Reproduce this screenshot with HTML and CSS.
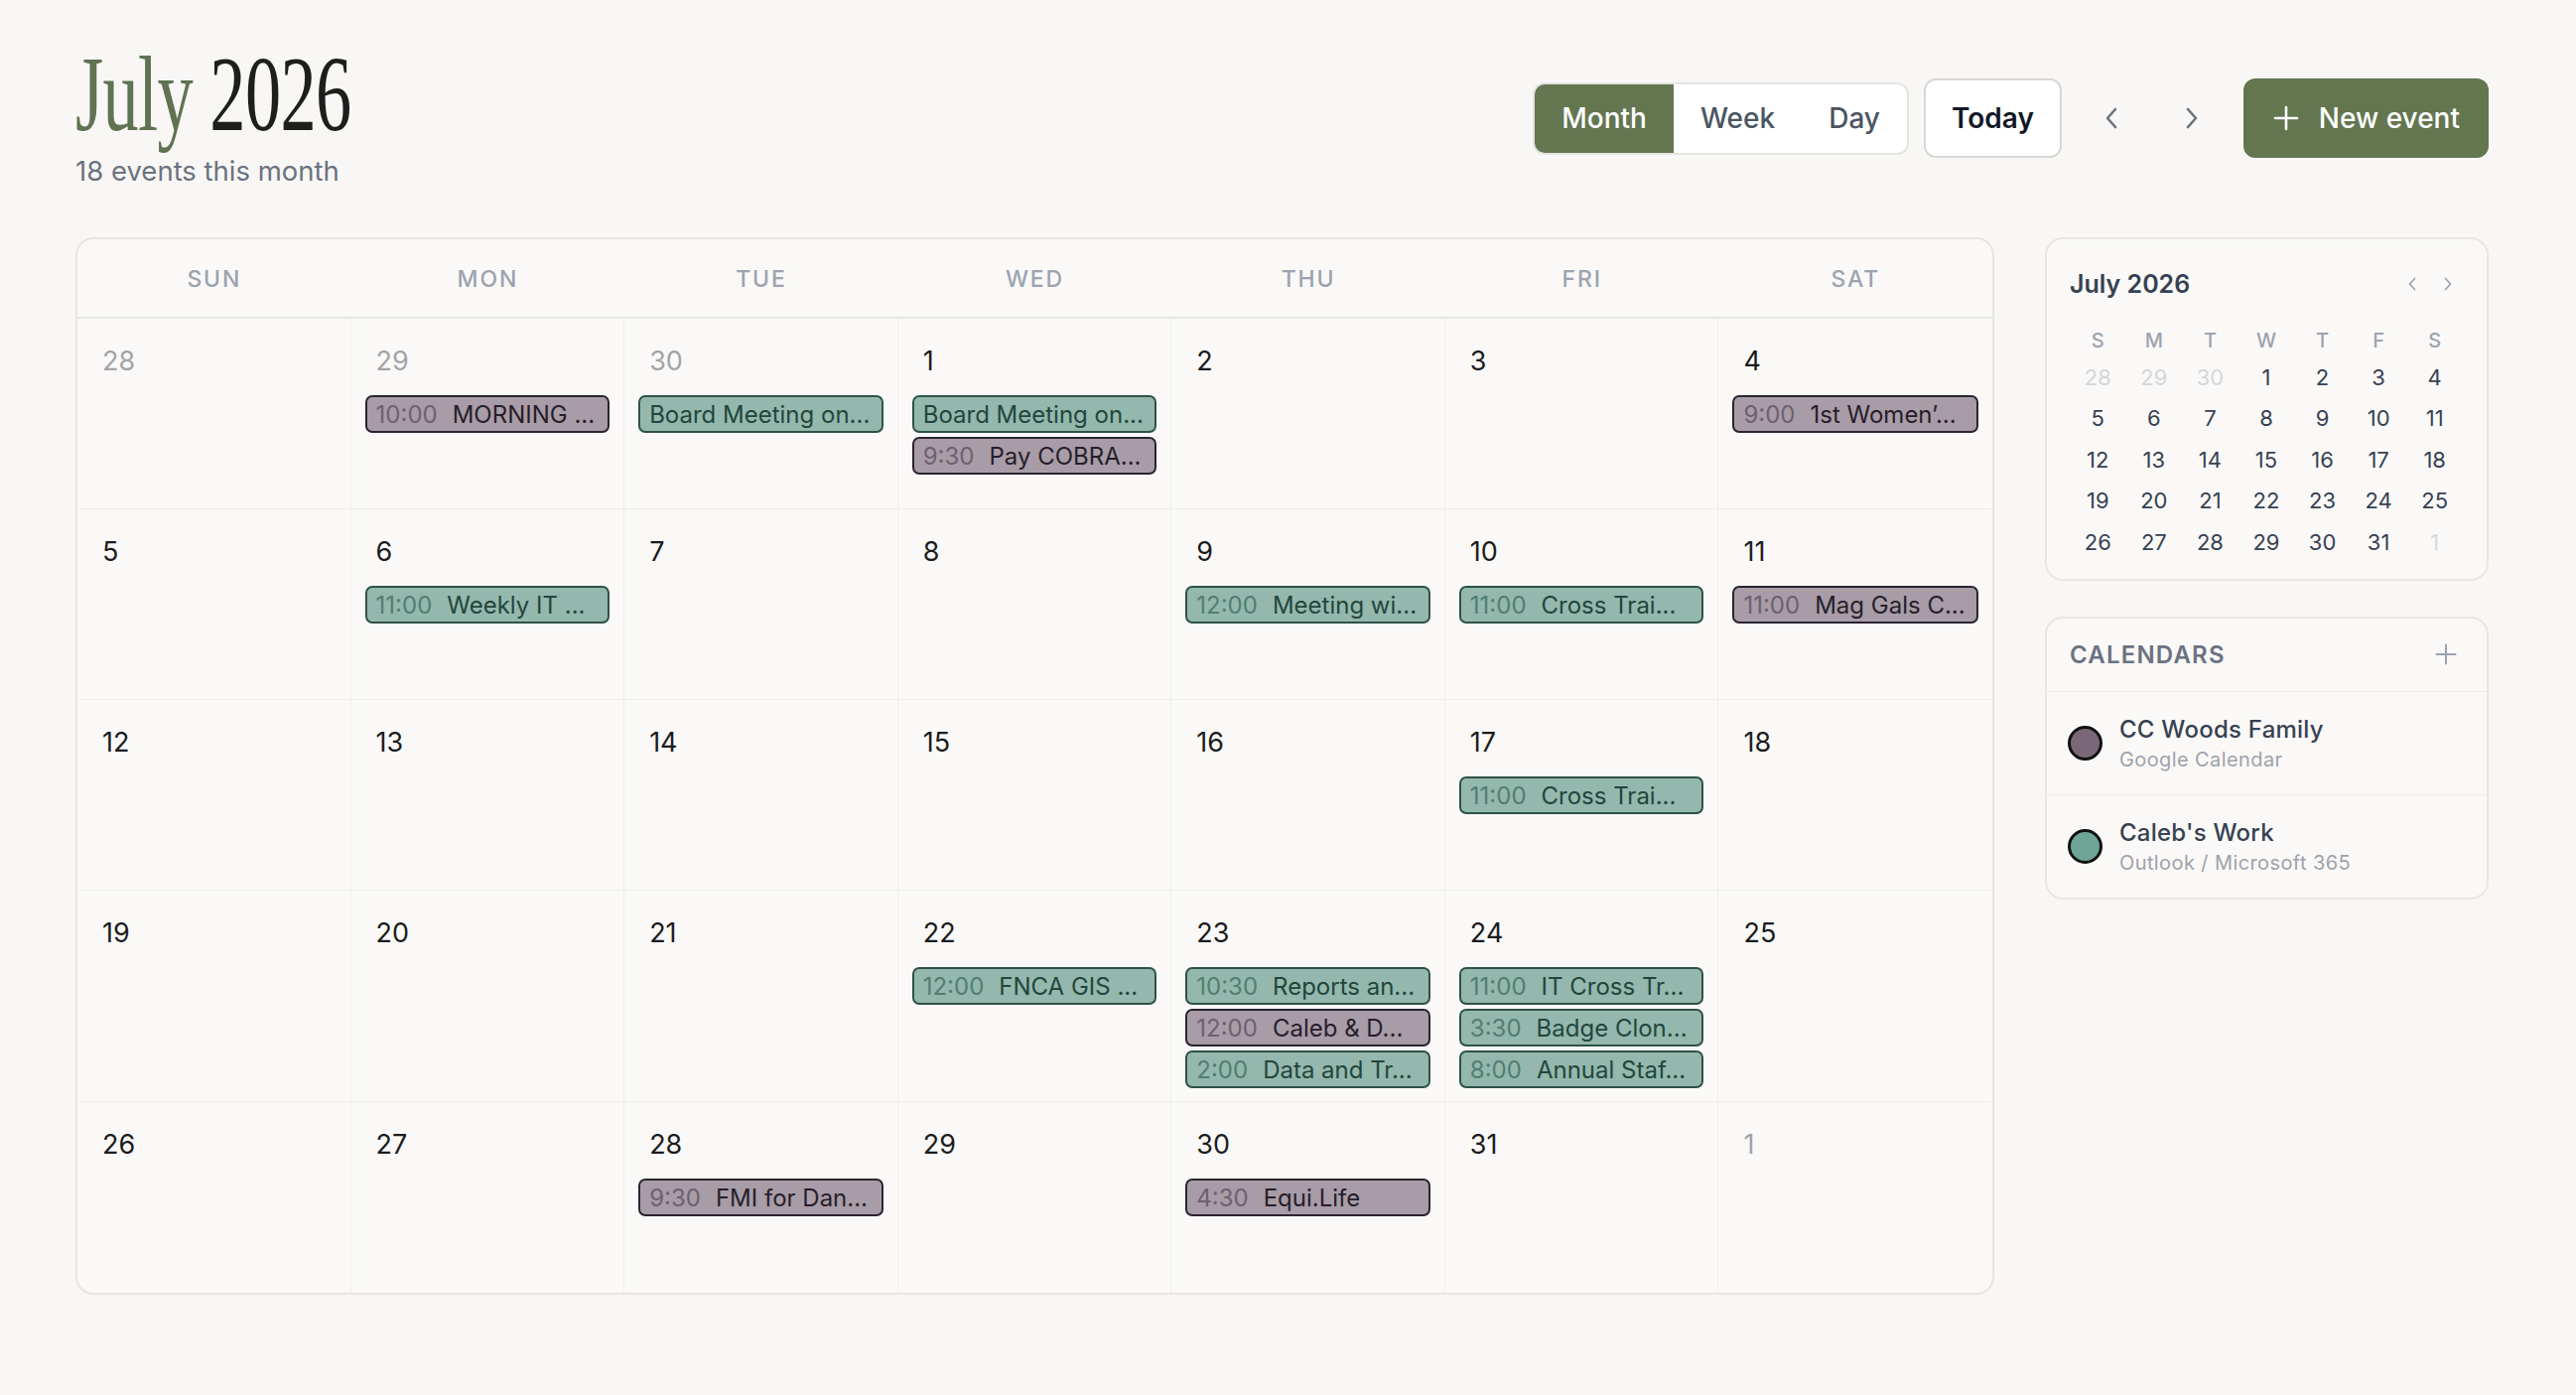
FILE: index.html
```html
<!DOCTYPE html>
<html lang="en">
<head>
<meta charset="utf-8">
<title>July 2026</title>
<link rel="stylesheet" href="styles.css">
</head>
<body>
<div class="page">
  <header class="topbar">
    <div class="title-block">
      <h1 class="title"><span class="month">July</span> <span class="year">2026</span></h1>
      <p class="subtitle">18 events this month</p>
    </div>
    <div class="toolbar">
      <div class="seg">
        <button class="seg-btn active">Month</button>
        <button class="seg-btn">Week</button>
        <button class="seg-btn">Day</button>
      </div>
      <button class="today">Today</button>
      <button class="nav-btn prev" aria-label="Previous"><svg width="16" height="22" viewBox="0 0 16 22"><path d="M12 2 L4 11 L12 20" fill="none" stroke="#6b7280" stroke-width="2.6" stroke-linecap="round" stroke-linejoin="round"/></svg></button>
      <button class="nav-btn next" aria-label="Next"><svg width="16" height="22" viewBox="0 0 16 22"><path d="M4 2 L12 11 L4 20" fill="none" stroke="#6b7280" stroke-width="2.6" stroke-linecap="round" stroke-linejoin="round"/></svg></button>
      <button class="new-btn"><svg width="26" height="26" viewBox="0 0 26 26"><path d="M13 2 V24 M2 13 H24" fill="none" stroke="#fff" stroke-width="2.6" stroke-linecap="round"/></svg><span>New event</span></button>
    </div>
  </header>

  <div class="layout">
    <section class="calendar">
      <div class="weekdays">
        <div class="wd">SUN</div><div class="wd">MON</div><div class="wd">TUE</div><div class="wd">WED</div><div class="wd">THU</div><div class="wd">FRI</div><div class="wd">SAT</div>
      </div>
      <div class="grid">
        <div class="cell"><div class="date muted">28</div></div>
        <div class="cell"><div class="date muted">29</div><div class="events"><div class="chip fam"><span class="time">10:00</span><span class="name">MORNING ...</span></div></div></div>
        <div class="cell"><div class="date muted">30</div><div class="events"><div class="chip work"><span class="name">Board Meeting on...</span></div></div></div>
        <div class="cell"><div class="date">1</div><div class="events"><div class="chip work"><span class="name">Board Meeting on...</span></div><div class="chip fam"><span class="time">9:30</span><span class="name">Pay COBRA...</span></div></div></div>
        <div class="cell"><div class="date">2</div></div>
        <div class="cell"><div class="date">3</div></div>
        <div class="cell"><div class="date">4</div><div class="events"><div class="chip fam"><span class="time">9:00</span><span class="name">1st Women’...</span></div></div></div>

        <div class="cell"><div class="date">5</div></div>
        <div class="cell"><div class="date">6</div><div class="events"><div class="chip work"><span class="time">11:00</span><span class="name">Weekly IT ...</span></div></div></div>
        <div class="cell"><div class="date">7</div></div>
        <div class="cell"><div class="date">8</div></div>
        <div class="cell"><div class="date">9</div><div class="events"><div class="chip work"><span class="time">12:00</span><span class="name">Meeting wi...</span></div></div></div>
        <div class="cell"><div class="date">10</div><div class="events"><div class="chip work"><span class="time">11:00</span><span class="name">Cross Trai...</span></div></div></div>
        <div class="cell"><div class="date">11</div><div class="events"><div class="chip fam"><span class="time">11:00</span><span class="name">Mag Gals C...</span></div></div></div>

        <div class="cell"><div class="date">12</div></div>
        <div class="cell"><div class="date">13</div></div>
        <div class="cell"><div class="date">14</div></div>
        <div class="cell"><div class="date">15</div></div>
        <div class="cell"><div class="date">16</div></div>
        <div class="cell"><div class="date">17</div><div class="events"><div class="chip work"><span class="time">11:00</span><span class="name">Cross Trai...</span></div></div></div>
        <div class="cell"><div class="date">18</div></div>

        <div class="cell"><div class="date">19</div></div>
        <div class="cell"><div class="date">20</div></div>
        <div class="cell"><div class="date">21</div></div>
        <div class="cell"><div class="date">22</div><div class="events"><div class="chip work"><span class="time">12:00</span><span class="name">FNCA GIS ...</span></div></div></div>
        <div class="cell"><div class="date">23</div><div class="events"><div class="chip work"><span class="time">10:30</span><span class="name">Reports an...</span></div><div class="chip fam"><span class="time">12:00</span><span class="name">Caleb &amp; D...</span></div><div class="chip work"><span class="time">2:00</span><span class="name">Data and Tr...</span></div></div></div>
        <div class="cell"><div class="date">24</div><div class="events"><div class="chip work"><span class="time">11:00</span><span class="name">IT Cross Tr...</span></div><div class="chip work"><span class="time">3:30</span><span class="name">Badge Clon...</span></div><div class="chip work"><span class="time">8:00</span><span class="name">Annual Staf...</span></div></div></div>
        <div class="cell"><div class="date">25</div></div>

        <div class="cell"><div class="date">26</div></div>
        <div class="cell"><div class="date">27</div></div>
        <div class="cell"><div class="date">28</div><div class="events"><div class="chip fam"><span class="time">9:30</span><span class="name">FMI for Dan...</span></div></div></div>
        <div class="cell"><div class="date">29</div></div>
        <div class="cell"><div class="date">30</div><div class="events"><div class="chip fam"><span class="time">4:30</span><span class="name">Equi.Life</span></div></div></div>
        <div class="cell"><div class="date">31</div></div>
        <div class="cell"><div class="date muted">1</div></div>
      </div>
    </section>

    <aside class="sidebar">
      <div class="card mini">
        <div class="mini-head">
          <span class="mini-title">July 2026</span>
          <div class="mini-nav">
            <span class="mini-arrow"><svg width="10" height="14" viewBox="0 0 10 14"><path d="M7.5 1.5 L2.5 7 L7.5 12.5" fill="none" stroke="#9ca3af" stroke-width="1.8" stroke-linecap="round" stroke-linejoin="round"/></svg></span>
            <span class="mini-arrow"><svg width="10" height="14" viewBox="0 0 10 14"><path d="M2.5 1.5 L7.5 7 L2.5 12.5" fill="none" stroke="#9ca3af" stroke-width="1.8" stroke-linecap="round" stroke-linejoin="round"/></svg></span>
          </div>
        </div>
        <div class="mini-grid">
          <div class="mini-wd">S</div><div class="mini-wd">M</div><div class="mini-wd">T</div><div class="mini-wd">W</div><div class="mini-wd">T</div><div class="mini-wd">F</div><div class="mini-wd">S</div>
          <div class="mini-d muted">28</div><div class="mini-d muted">29</div><div class="mini-d muted">30</div><div class="mini-d">1</div><div class="mini-d">2</div><div class="mini-d">3</div><div class="mini-d">4</div>
          <div class="mini-d">5</div><div class="mini-d">6</div><div class="mini-d">7</div><div class="mini-d">8</div><div class="mini-d">9</div><div class="mini-d">10</div><div class="mini-d">11</div>
          <div class="mini-d">12</div><div class="mini-d">13</div><div class="mini-d">14</div><div class="mini-d">15</div><div class="mini-d">16</div><div class="mini-d">17</div><div class="mini-d">18</div>
          <div class="mini-d">19</div><div class="mini-d">20</div><div class="mini-d">21</div><div class="mini-d">22</div><div class="mini-d">23</div><div class="mini-d">24</div><div class="mini-d">25</div>
          <div class="mini-d">26</div><div class="mini-d">27</div><div class="mini-d">28</div><div class="mini-d">29</div><div class="mini-d">30</div><div class="mini-d">31</div><div class="mini-d muted">1</div>
        </div>
      </div>

      <div class="card cals">
        <div class="cal-head">
          <span class="cal-title">CALENDARS</span>
          <svg width="22" height="22" viewBox="0 0 22 22"><path d="M11 1.5 V20.5 M1.5 11 H20.5" fill="none" stroke="#9ca3af" stroke-width="2" stroke-linecap="round"/></svg>
        </div>
        <div class="cal-item">
          <span class="dot dot-fam"></span>
          <div class="cal-text">
            <div class="cal-name">CC Woods Family</div>
            <div class="cal-sub">Google Calendar</div>
          </div>
        </div>
        <div class="cal-item">
          <span class="dot dot-work"></span>
          <div class="cal-text">
            <div class="cal-name">Caleb's Work</div>
            <div class="cal-sub">Outlook / Microsoft 365</div>
          </div>
        </div>
      </div>
    </aside>
  </div>
</div>
</body>
</html>
```

FILE: styles.css
```css
* { box-sizing: border-box; }

body {
  margin: 0;
  background: #f8f7f5;
  font-family: Inter, "Noto Sans", "Liberation Sans", sans-serif;
  color: #1f2937;
}

.page {
  padding: 41px 88px 40px 76px;
}

/* ---------- header ---------- */
.topbar {
  display: flex;
  justify-content: space-between;
  align-items: flex-start;
}

.title {
  margin: 0;
  display: block;
  font-family: "Liberation Serif", "DejaVu Serif", serif;
  font-weight: 400;
  font-size: 108px;
  line-height: 1;
  white-space: nowrap;
  letter-spacing: -1px;
  transform: scaleX(0.67);
  transform-origin: left center;
  width: 440px;
}
.title .month { color: #5f7352; }
.title .year { color: #1e1e1c; }

.subtitle {
  margin: 6px 0 0;
  font-size: 27.5px;
  line-height: 35px;
  color: #6b7280;
}

.toolbar {
  display: flex;
  align-items: center;
  margin-top: 38px;
}

button {
  font-family: inherit;
  cursor: pointer;
}

.seg {
  display: flex;
  height: 73px;
  border: 2px solid #e6e4e1;
  border-radius: 12px;
  background: #fff;
  overflow: hidden;
  margin-right: 15px;
}
.seg-btn {
  border: 0;
  background: transparent;
  font-size: 28px;
  font-weight: 500;
  color: #4b5563;
  padding: 0 27px;
}
.seg-btn.active {
  background: #637650;
  color: #fff;
}

.today {
  height: 80px;
  padding: 0 26px;
  border: 2px solid #d9d7d3;
  border-radius: 12px;
  background: #fff;
  font-size: 28px;
  font-weight: 600;
  color: #111827;
  margin-right: 18px;
}

.nav-btn {
  width: 64px;
  height: 64px;
  border: 0;
  background: transparent;
  display: flex;
  align-items: center;
  justify-content: center;
  padding: 0;
}
.nav-btn.prev { margin-right: 17px; }
.nav-btn.next { margin-right: 20px; }

.new-btn {
  height: 80px;
  display: flex;
  align-items: center;
  gap: 20px;
  padding: 0 29px 0 30px;
  border: 0;
  border-radius: 12px;
  background: #637650;
  color: #fff;
  font-size: 28px;
  font-weight: 500;
}

/* ---------- layout ---------- */
.layout {
  display: grid;
  grid-template-columns: 1fr 447px;
  gap: 51px;
  align-items: start;
  margin-top: 49px;
}

/* ---------- month grid ---------- */
.calendar {
  border: 2px solid #e7e5e2;
  border-radius: 18px;
  background: #faf9f8;
  overflow: hidden;
}

.weekdays {
  display: grid;
  grid-template-columns: repeat(7, 1fr);
  border-bottom: 2px solid #e8e6e3;
}
.wd {
  height: 78px;
  line-height: 81px;
  text-align: center;
  font-size: 23px;
  font-weight: 500;
  letter-spacing: 0.08em;
  color: #9ca3af;
}

.grid {
  display: grid;
  grid-template-columns: repeat(7, 1fr);
}
.cell {
  min-height: 192px;
  padding: 25px 14px 13px;
  border-right: 1px solid #f1efec;
  border-bottom: 1px solid #f1efec;
  min-width: 0;
}
.cell:nth-child(7n) { border-right: 0; }
.cell:nth-last-child(-n+7) { border-bottom: 0; }

.date {
  font-size: 27px;
  line-height: 36px;
  padding-left: 11px;
  margin-bottom: 16px;
  color: #1c1c1c;
}
.date.muted { color: #a3a3a8; }

.events {
  display: flex;
  flex-direction: column;
  gap: 4px;
}

.chip {
  height: 38px;
  border: 2px solid;
  border-radius: 7px;
  display: flex;
  align-items: center;
  gap: 15px;
  padding: 0 9px;
  font-size: 24px;
  white-space: nowrap;
  overflow: hidden;
}
.chip .name { overflow: hidden; }
.chip.fam {
  background: #a89ca7;
  border-color: #2a2430;
  color: #261e2b;
}
.chip.fam .time { color: #6c616f; }
.chip.work {
  background: #94b8ad;
  border-color: #2e5247;
  color: #22463c;
}
.chip.work .time { color: #537d71; }

/* ---------- sidebar ---------- */
.sidebar {
  display: flex;
  flex-direction: column;
  gap: 36px;
}

.card {
  border: 2px solid #e9e7e4;
  border-radius: 18px;
  background: #faf9f8;
}

.mini {
  padding: 27px 24px 17px 23px;
}
.mini-head {
  display: flex;
  justify-content: space-between;
  align-items: center;
  height: 36px;
}
.mini-title {
  font-size: 25px;
  font-weight: 600;
  color: #374151;
}
.mini-nav {
  display: flex;
  gap: 6px;
}
.mini-arrow {
  width: 30px;
  height: 30px;
  display: flex;
  align-items: center;
  justify-content: center;
}

.mini-grid {
  display: grid;
  grid-template-columns: repeat(7, 1fr);
  margin-top: 23px;
}
.mini-wd {
  height: 32px;
  line-height: 32px;
  text-align: center;
  font-size: 20px;
  font-weight: 500;
  color: #9ca3af;
}
.mini-d {
  height: 41.4px;
  line-height: 43px;
  text-align: center;
  font-size: 22px;
  color: #374151;
}
.mini-d.muted { color: #d6d6da; }

.cal-head {
  display: flex;
  justify-content: space-between;
  align-items: center;
  height: 74px;
  padding: 0 30px 0 23px;
  border-bottom: 1px solid #efedea;
}
.cal-title {
  font-size: 24px;
  font-weight: 600;
  letter-spacing: 0.05em;
  color: #6b7280;
}

.cal-item {
  display: flex;
  align-items: center;
  gap: 17px;
  padding: 22px 22px 21px 21px;
  border-bottom: 1px solid #efedea;
}
.cal-item:last-child { border-bottom: 0; }

.dot {
  width: 35px;
  height: 35px;
  border-radius: 50%;
  border: 3px solid #111;
  flex: none;
}
.dot-fam { background: #7a6878; }
.dot-work { background: #6fa597; }

.cal-name {
  font-size: 24px;
  line-height: 32px;
  font-weight: 500;
  color: #374151;
  letter-spacing: 0.01em;
}
.cal-sub {
  font-size: 20px;
  line-height: 28px;
  color: #a1a1aa;
  letter-spacing: 0.02em;
}
```
